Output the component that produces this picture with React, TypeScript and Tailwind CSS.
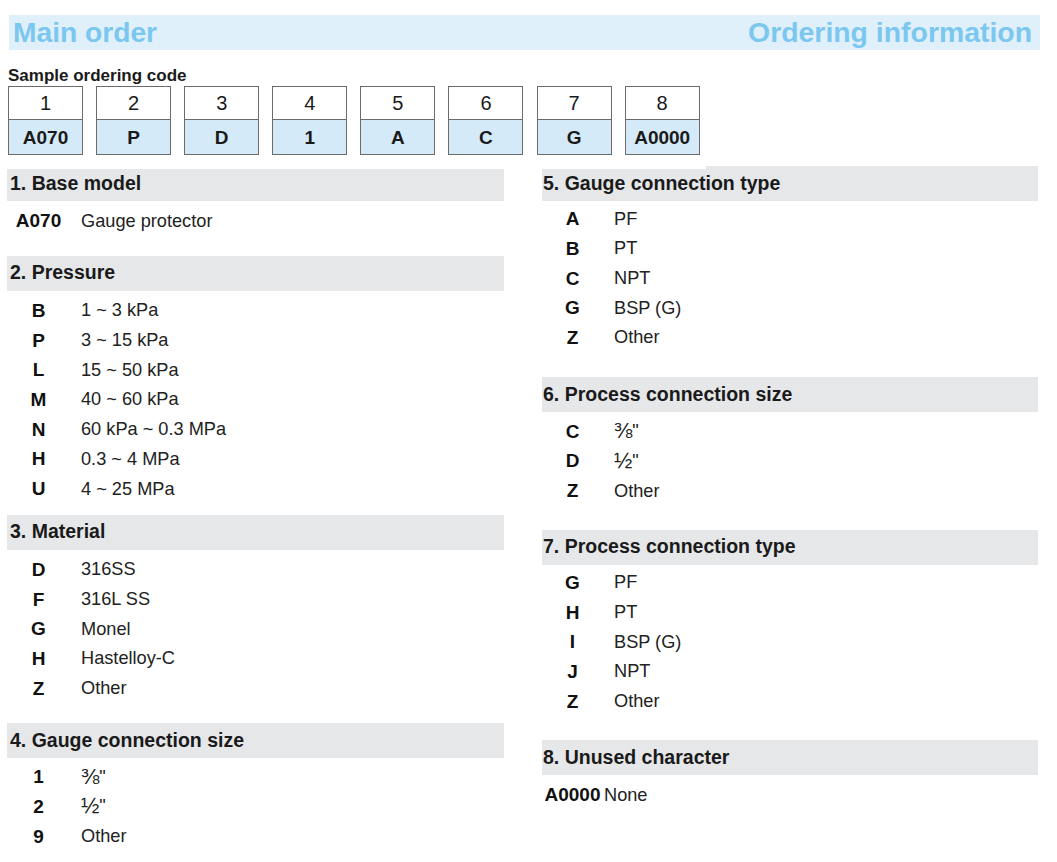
import React from "react";

type Row = { code: string; desc: React.ReactNode };

const codeBoxes = [
  ["1", "A070"],
  ["2", "P"],
  ["3", "D"],
  ["4", "1"],
  ["5", "A"],
  ["6", "C"],
  ["7", "G"],
  ["8", "A0000"],
];

function Frac({ ch }: { ch: string }) {
  return (
    <span className="inline-flex items-center">
      <span className="text-[22px] leading-none">{ch}</span>
      <span>"</span>
    </span>
  );
}

function Band({ title, left }: { title: string; left?: boolean }) {
  return (
    <div
      className={`h-[35px] bg-[#e6e7e9] flex items-center ${left ? "pl-[3px]" : "pl-[1px]"}`}
    >
      <span className="text-[19.5px] font-bold leading-none text-[#1a1a1a]">{title}</span>
    </div>
  );
}

function Rows({ rows, left, tight }: { rows: Row[]; left?: boolean; tight?: boolean }) {
  return (
    <div className="flex flex-col">
      {rows.map((r, i) => (
        <div key={r.code + i} className="h-[29.7px] flex items-center">
          <span
            className={`${left ? "w-[63px]" : "w-[61px]"} text-center text-[19px] font-bold leading-none text-[#111]`}
          >
            {r.code}
          </span>
          <span
            className={`${tight ? "pl-[1px]" : "pl-[11px]"} text-[18.2px] leading-none text-[#222]`}
          >
            {r.desc}
          </span>
        </div>
      ))}
    </div>
  );
}

export default function App() {
  return (
    <div
      className="w-[1057px] h-[862px] bg-white overflow-hidden"
      style={{ fontFamily: '"Liberation Sans", Arial, sans-serif' }}
    >
      {/* Header band */}
      <div className="pt-[15px]">
        <div className="ml-[9px] w-[1031px] h-[35px] bg-[#dff0fb] flex items-center justify-between pl-[4px] pr-[8px]">
          <span className="text-[28.2px] font-bold leading-none text-[#7bc7ef]">Main order</span>
          <span className="text-[28.4px] font-bold leading-none text-[#7bc7ef]">Ordering information</span>
        </div>
      </div>

      {/* Sample ordering code */}
      <div className="ml-[8px] mt-[17px] text-[17px] font-bold leading-none text-[#1a1a1a]">
        Sample ordering code
      </div>
      <div className="ml-[8px] mt-[2px] flex gap-[13.1px]">
        {codeBoxes.map(([n, c]) => (
          <div key={n} className="w-[75px] border border-[#6b6b6b] flex flex-col">
            <div className="h-[32px] bg-white flex items-center justify-center text-[20px] leading-none text-[#1a1a1a]">
              {n}
            </div>
            <div className="h-[35px] border-t border-[#6b6b6b] bg-[#d5eaf8] flex items-center justify-center text-[19px] font-bold leading-none text-[#1a1a1a]">
              {c}
            </div>
          </div>
        ))}
      </div>

      {/* Two columns */}
      <div className="relative mt-[11px] flex">
        <div className="absolute left-0 top-0 w-[706px] h-[3px] bg-white" />
        {/* Left column */}
        <div className="ml-[7px] w-[497px] flex flex-col">
          <Band title="1. Base model" left />
          <div className="pt-[5px]">
            <Rows left rows={[{ code: "A070", desc: "Gauge protector" }]} />
          </div>
          <div className="mt-[20px]">
            <Band title="2. Pressure" left />
          </div>
          <div className="pt-[5px]">
            <Rows
              left
              rows={[
                { code: "B", desc: "1 ~ 3 kPa" },
                { code: "P", desc: "3 ~ 15 kPa" },
                { code: "L", desc: "15 ~ 50 kPa" },
                { code: "M", desc: "40 ~ 60 kPa" },
                { code: "N", desc: "60 kPa ~ 0.3 MPa" },
                { code: "H", desc: "0.3 ~ 4 MPa" },
                { code: "U", desc: "4 ~ 25 MPa" },
              ]}
            />
          </div>
          <div className="mt-[11px]">
            <Band title="3. Material" left />
          </div>
          <div className="pt-[5px]">
            <Rows
              left
              rows={[
                { code: "D", desc: "316SS" },
                { code: "F", desc: "316L SS" },
                { code: "G", desc: "Monel" },
                { code: "H", desc: "Hastelloy-C" },
                { code: "Z", desc: "Other" },
              ]}
            />
          </div>
          <div className="mt-[20px]">
            <Band title="4. Gauge connection size" left />
          </div>
          <div className="pt-[4px]">
            <Rows
              left
              rows={[
                { code: "1", desc: <Frac ch={"\u215C"} /> },
                { code: "2", desc: <Frac ch={"\u00BD"} /> },
                { code: "9", desc: "Other" },
              ]}
            />
          </div>
        </div>

        {/* Right column */}
        <div className="ml-[38px] w-[496px] flex flex-col">
          <Band title="5. Gauge connection type" />
          <div className="pt-[3px]">
            <Rows
              rows={[
                { code: "A", desc: "PF" },
                { code: "B", desc: "PT" },
                { code: "C", desc: "NPT" },
                { code: "G", desc: "BSP (G)" },
                { code: "Z", desc: "Other" },
              ]}
            />
          </div>
          <div className="mt-[25px]">
            <Band title="6. Process connection size" />
          </div>
          <div className="pt-[4px]">
            <Rows
              rows={[
                { code: "C", desc: <Frac ch={"\u215C"} /> },
                { code: "D", desc: <Frac ch={"\u00BD"} /> },
                { code: "Z", desc: "Other" },
              ]}
            />
          </div>
          <div className="mt-[24px]">
            <Band title="7. Process connection type" />
          </div>
          <div className="pt-[3px]">
            <Rows
              rows={[
                { code: "G", desc: "PF" },
                { code: "H", desc: "PT" },
                { code: "I", desc: "BSP (G)" },
                { code: "J", desc: "NPT" },
                { code: "Z", desc: "Other" },
              ]}
            />
          </div>
          <div className="mt-[24px]">
            <Band title="8. Unused character" />
          </div>
          <div className="pt-[5px]">
            <Rows tight rows={[{ code: "A0000", desc: "None" }]} />
          </div>
        </div>
      </div>
    </div>
  );
}
